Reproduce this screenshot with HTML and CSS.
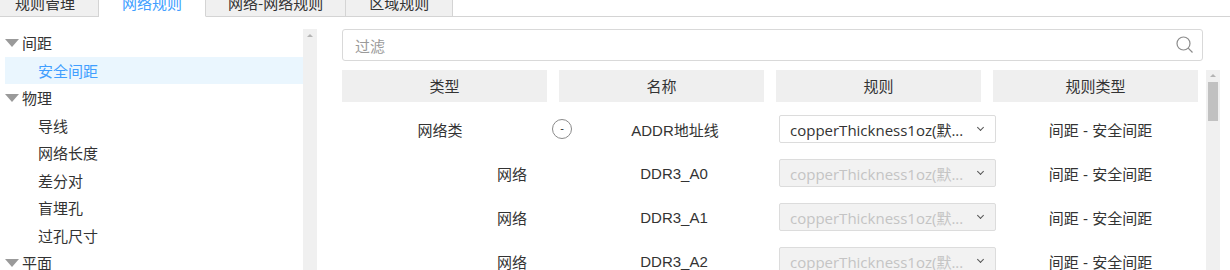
FILE: index.html
```html
<!DOCTYPE html>
<html lang="zh-CN">
  <head>
    <meta charset="UTF-8" />
    <title>网络规则</title>
    <link rel="stylesheet" href="styles.css">
  </head>
  <body>
    <div class="tabs">
      <div class="tab">规则管理</div>
      <div class="tab active">网络规则</div>
      <div class="tab">网络-网络规则</div>
      <div class="tab">区域规则</div>
    </div>

    <div class="main">
      <!-- 左侧规则树 -->
      <div class="side">
        <ul class="tree">
          <li class="node"><span class="arrow"></span>间距</li>
          <li class="leaf selected">安全间距</li>
          <li class="node"><span class="arrow"></span>物理</li>
          <li class="leaf">导线</li>
          <li class="leaf">网络长度</li>
          <li class="leaf">差分对</li>
          <li class="leaf">盲埋孔</li>
          <li class="leaf">过孔尺寸</li>
          <li class="node"><span class="arrow"></span>平面</li>
        </ul>
        <div class="scrollbar"><span class="up"></span></div>
      </div>

      <!-- 右侧表格 -->
      <div class="content">
        <div class="filter">
          <span class="placeholder">过滤</span>
          <svg class="search" width="18" height="18" viewBox="0 0 18 18">
            <circle cx="7.5" cy="7.5" r="6.5" fill="none" stroke="#8c8c8c" stroke-width="1.2" />
            <line x1="12.2" y1="12.2" x2="16.5" y2="16.5" stroke="#8c8c8c" stroke-width="1.2" />
          </svg>
        </div>

        <div class="table-wrap">
          <div class="table">
            <div class="row head">
              <div class="cell">类型</div>
              <div class="cell">名称</div>
              <div class="cell">规则</div>
              <div class="cell">规则类型</div>
            </div>

            <div class="row">
              <div class="cell parent-type">网络类</div>
              <div class="cell name parent">
                <span class="toggle">-</span>
                <span class="label">ADDR地址线</span>
              </div>
              <div class="cell">
                <div class="select">copperThickness1oz(默...<span class="chev"></span></div>
              </div>
              <div class="cell kind">间距 - 安全间距</div>
            </div>

            <div class="row">
              <div class="cell child">网络</div>
              <div class="cell name">DDR3_A0</div>
              <div class="cell">
                <div class="select disabled">copperThickness1oz(默...<span class="chev"></span></div>
              </div>
              <div class="cell kind">间距 - 安全间距</div>
            </div>

            <div class="row">
              <div class="cell child">网络</div>
              <div class="cell name">DDR3_A1</div>
              <div class="cell">
                <div class="select disabled">copperThickness1oz(默...<span class="chev"></span></div>
              </div>
              <div class="cell kind">间距 - 安全间距</div>
            </div>

            <div class="row">
              <div class="cell child">网络</div>
              <div class="cell name">DDR3_A2</div>
              <div class="cell">
                <div class="select disabled">copperThickness1oz(默...<span class="chev"></span></div>
              </div>
              <div class="cell kind">间距 - 安全间距</div>
            </div>
          </div>
          <div class="vbar"><span class="up"></span><span class="thumb"></span></div>
        </div>
      </div>
    </div>
  </body>
</html>
```

FILE: styles.css
```css
* {
  margin: 0;
  padding: 0;
  box-sizing: border-box;
}

html,
body {
  height: 100%;
  overflow: hidden;
}

body {
  background: #fff;
  color: #333;
  font-family: "Liberation Sans", "Noto Sans CJK SC", sans-serif;
  font-size: 15px;
}

ul {
  list-style: none;
}

/* 顶部标签 */
.tabs {
  display: flex;
  height: 30px;
  margin: -13px 0 0 -8px;
  border-bottom: 1px solid #d4d4d4;
}

.tab {
  height: 30px;
  padding: 0 23px;
  line-height: 30px;
  font-family: "Noto Sans CJK SC", sans-serif;
  background: #f0f0f0;
  border: 1px solid #d4d4d4;
  border-left: 0;
}

.tab:nth-child(3) {
  padding: 0 22px;
}

.tab.active {
  background: #fff;
  color: #409eff;
  border-bottom-color: #fff;
}

.main {
  display: flex;
  padding-top: 12px;
  height: calc(100% - 17px);
}

/* 左侧树 */
.side {
  display: flex;
  width: 317px;
  flex: none;
}

.tree {
  flex: 1;
  padding-left: 5px;
}

.tree li {
  height: 27.5px;
  line-height: 27.5px;
  font-family: "Noto Sans CJK SC", sans-serif;
  white-space: nowrap;
}

.tree .node {
  display: flex;
  align-items: center;
}

.arrow {
  width: 0;
  height: 0;
  margin: 0 3px 0 0;
  border-left: 7.5px solid transparent;
  border-right: 7.5px solid transparent;
  border-top: 8px solid #9a9a9a;
}

.tree .leaf {
  padding-left: 33px;
}

.tree .selected {
  background: #eaf6fe;
  color: #409eff;
}

.scrollbar {
  width: 14px;
  background: #f0f0f0;
  display: flex;
  justify-content: center;
}

.up {
  margin-top: 5px;
  width: 0;
  height: 0;
  border-left: 3.5px solid transparent;
  border-right: 3.5px solid transparent;
  border-bottom: 3.5px solid #b4b4b4;
}

/* 右侧内容 */
.content {
  flex: 1;
  padding: 0 10px 0 25px;
  display: flex;
  flex-direction: column;
  gap: 9px;
}

.filter {
  flex: none;
  height: 32px;
  width: 861px;
  border: 1px solid #d9d9d9;
  border-radius: 3px;
  display: flex;
  align-items: center;
  justify-content: space-between;
  padding: 0 8px 0 12px;
}

.placeholder {
  color: #9a9a9a;
  font-family: "Noto Sans CJK SC", sans-serif;
}

.table-wrap {
  flex: 1;
  display: flex;
  gap: 7px;
}

.table {
  width: 857px;
}

.row {
  display: grid;
  grid-template-columns: repeat(4, 205px);
  column-gap: 12px;
  height: 44px;
  align-items: center;
}

.row.head {
  height: 32px;
  margin-bottom: 5px;
  align-items: stretch;
}

.head .cell {
  background: #efefef;
  line-height: 32px;
  font-family: "Noto Sans CJK SC", sans-serif;
}

.cell {
  text-align: center;
  white-space: nowrap;
}

.cell.parent-type {
  padding-right: 9px;
}

.cell.child {
  padding-left: 135px;
}

.cell.name {
  padding-left: 25px;
}

.cell.name.parent {
  display: flex;
  align-items: center;
  padding-left: 0;
  margin-left: -7px;
}

.toggle {
  width: 20px;
  height: 20px;
  border: 1px solid #8a8a8a;
  border-radius: 50%;
  font-size: 11px;
  line-height: 16px;
  text-align: center;
  flex: none;
}

.label {
  flex: 1;
  padding-left: 14px;
}

.cell.kind {
  padding-left: 10px;
}

.select {
  width: 217px;
  height: 28px;
  margin-left: 3px;
  border: 1px solid #dcdcdc;
  border-radius: 2px;
  display: flex;
  align-items: center;
  justify-content: space-between;
  padding: 0 12px 0 10px;
  font-family: "Open Sans", "Noto Sans CJK SC", sans-serif;
  font-size: 15px;
  color: #333;
  text-align: left;
}

.select.disabled {
  background: #f2f2f2;
  color: #c4c4c4;
}

.chev {
  width: 5px;
  height: 5px;
  border-right: 1.2px solid #555;
  border-bottom: 1.2px solid #555;
  transform: rotate(45deg);
  margin-top: -3px;
}

.vbar {
  width: 14px;
  background: #f0f0f0;
  display: flex;
  flex-direction: column;
  align-items: center;
}

.vbar .up {
  margin-top: 4px;
}

.thumb {
  margin-top: 5px;
  width: 10px;
  height: 39px;
  background: #c1c1c1;
}
```
